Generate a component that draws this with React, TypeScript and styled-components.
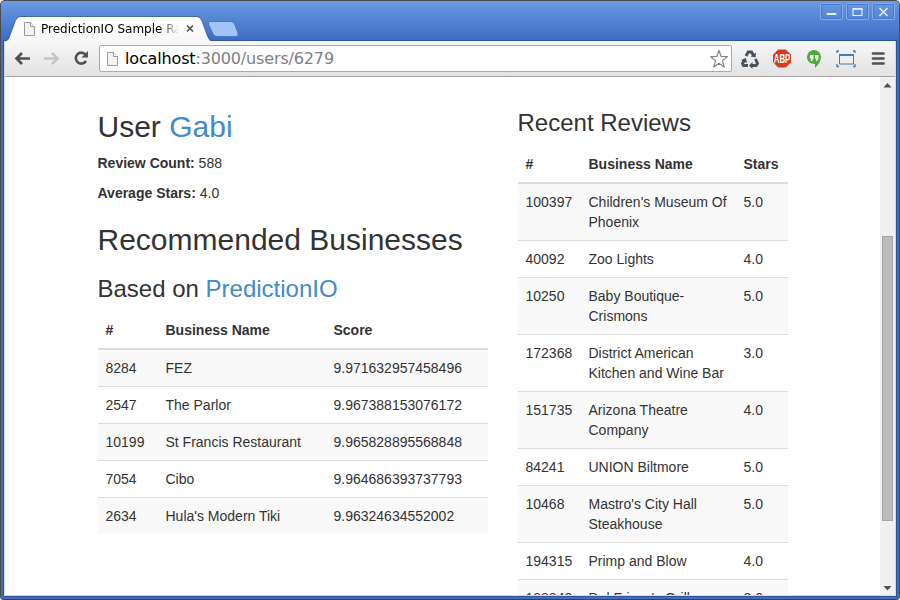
import React from 'react';
import styled, { createGlobalStyle } from 'styled-components';

const Global = createGlobalStyle`
  * { box-sizing: border-box; }
  html, body { margin: 0; padding: 0; background: #fff; }
  body { width: 900px; height: 600px; overflow: hidden; font-family: "Liberation Sans", Arial, sans-serif; }
`;

const Window = styled.div`
  display: flex;
  flex-direction: column;
  width: 900px;
  height: 600px;
  padding: 0 3px 3px;
  border: 1px solid #4a4b50;
  border-bottom-color: #3a4252;
  border-radius: 5px 5px 4px 4px;
  background: linear-gradient(#6b9be2 0, #5f90dc 8px, #3f6dc6 38px, #3f6dc6 100%);
  overflow: hidden;
`;

const TitleBar = styled.header`
  display: flex;
  justify-content: space-between;
  flex: none;
  height: 40px;
  padding-left: 1px;
`;

const TabStrip = styled.div`
  display: grid;
  width: 250px;
  height: 41px;
  z-index: 1;
  > * { grid-area: 1 / 1; }
`;

const TabLabel = styled.div`
  display: flex;
  align-items: center;
  height: 24px;
  margin: 16px 0 0 18px;
  z-index: 1;
`;

const TabTitle = styled.span`
  width: 138px;
  margin-left: 5px;
  overflow: hidden;
  white-space: nowrap;
  color: #000;
  font: 12px/16px "DejaVu Sans", sans-serif;
  mask-image: linear-gradient(90deg, #000 118px, transparent 138px);
`;

const Controls = styled.div`
  display: flex;
  gap: 3px;
  padding: 2px 1px 0 0;
`;

const ControlButton = styled.div`
  display: grid;
  place-items: center;
  width: 23px;
  height: 17px;
  border: 1px solid #87abe5;
  border-radius: 2px;
  box-shadow: inset 0 0 0 1px #4b79cb;
`;

const Frame = styled.div`
  display: flex;
  flex-direction: column;
  flex: 1;
  min-height: 0;
  border: 1px solid #d5d9e1;
  border-top: 0;
  box-shadow: 0 0 0 1px #2c549f;
`;

const Toolbar = styled.nav`
  display: flex;
  align-items: center;
  flex: none;
  height: 36px;
  padding: 0 4px 0 8px;
  border-bottom: 1px solid #a3a3a3;
  background: linear-gradient(#f7f7f7, #e2e2e2);
`;

const NavIcons = styled.div`
  display: flex;
  flex: none;
  width: 86px;
`;

const Address = styled.div`
  display: flex;
  align-items: center;
  flex: none;
  width: 633px;
  height: 27px;
  padding: 0 2px 0 6px;
  border: 1px solid #aaa;
  border-radius: 2px;
  background: #fff;
`;

const Url = styled.span`
  flex: 1;
  margin-left: 6px;
  color: #808080;
  font: 16px/22px "DejaVu Sans", sans-serif;
  letter-spacing: -0.15px;
  b { color: #000; font-weight: 400; }
`;

const Extensions = styled.div`
  display: flex;
  align-items: center;
  flex: none;
  margin-left: 8px;
  gap: 12px;
`;

const Viewport = styled.div`
  display: flex;
  flex: 1;
  min-height: 0;
  background: #fff;
`;

const Page = styled.main`
  display: grid;
  grid-template-columns: 390px 270px;
  column-gap: 30px;
  align-items: start;
  flex: 1;
  padding: 32.6px 0 0 92.5px;
  overflow: hidden;
  color: #333;
  font-size: 14px;
  line-height: 20px;
`;

const Heading = styled.h2`
  margin: 0 0 10px;
  font-size: 30px;
  font-weight: 500;
  line-height: 33px;
  white-space: nowrap;
  p + & { margin-top: 20px; }
`;

const SubHeading = styled.h3`
  margin: 0 0 10px;
  font-size: 24px;
  font-weight: 500;
  line-height: 26.4px;
  h2 + & { margin-top: 20px; }
`;

const Link = styled.a`
  color: #428bca;
`;

const Fact = styled.p`
  margin: 0 0 10px;
`;

const Table = styled.table<{ $columns: string }>`
  display: grid;
  grid-template-columns: ${p => p.$columns};
  thead, tbody, tr { display: grid; grid-column: 1 / -1; grid-template-columns: subgrid; }
  tbody tr { border-bottom: 1px solid #ddd; }
  tbody tr:last-child { border-bottom: 0; }
  tbody tr:nth-child(odd) { background: #f9f9f9; }
  thead tr { border-bottom: 2px solid #ddd; }
  th, td { padding: 8px; text-align: left; }
  td:nth-child(3), th:nth-child(3) { white-space: nowrap; }
`;

const Scrollbar = styled.div`
  display: flex;
  flex-direction: column;
  align-items: center;
  justify-content: space-between;
  width: 15px;
  padding: 6px 0 4px;
  background: #f0f0f0;
`;

const Track = styled.div`
  width: 11px;
  flex: 1;
  padding-top: 148px;
`;

const Thumb = styled.div`
  height: 285px;
  border: 1px solid #a6a6a6;
  background: #bcbcbc;
`;

const Arrow = styled.svg`
  display: block;
  flex: none;
`;

const DocIcon = () => (
  <svg width="13" height="16" viewBox="0 0 13 16">
    <path d="M1.5 1.5h6l4 4v9h-10z" fill="#f4f4f4" stroke="#9a9a9a" />
    <path d="M7.5 1.5v4h4" fill="#fff" stroke="#9a9a9a" />
  </svg>
);

const TabShape = () => (
  <svg width="250" height="41">
    <defs>
      <linearGradient id="tab" x1="0" y1="0" x2="0" y2="1">
        <stop offset="0" stopColor="#fff" />
        <stop offset="1" stopColor="#f7f7f7" />
      </linearGradient>
    </defs>
    <path d="M0 40.5C3 40 4 38 5 35L10.500 20Q12 16 15 16H192Q195 16 197 20L202 34Q204 40 207 40.500V41H0Z" fill="url(#tab)" />
    <path d="M0 40C3 39 4 37 5 34L10 20Q12 15.500 15 15.500H192Q195 15.500 197 20L202 34Q204 39.500 207 39.500H250" fill="none" stroke="#3559a0" strokeOpacity=".7" />
    <path d="M205 20.500H226Q228.500 20.500 229.500 23L233 32Q234 35.500 231 35.500H212Q209 35.500 208 33L203.500 23Q202.500 20.500 205 20.500Z" fill="#a2c4f4" stroke="#4b78c4" />
  </svg>
);

const left = [
  ['8284', 'FEZ', '9.971632957458496'],
  ['2547', 'The Parlor', '9.967388153076172'],
  ['10199', 'St Francis Restaurant', '9.965828895568848'],
  ['7054', 'Cibo', '9.964686393737793'],
  ['2634', "Hula's Modern Tiki", '9.96324634552002'],
];

const right = [
  ['100397', "Children's Museum Of Phoenix", '5.0'],
  ['40092', 'Zoo Lights', '4.0'],
  ['10250', 'Baby Boutique-Crismons', '5.0'],
  ['172368', 'District American Kitchen and Wine Bar', '3.0'],
  ['151735', 'Arizona Theatre Company', '4.0'],
  ['84241', 'UNION Biltmore', '5.0'],
  ['10468', "Mastro's City Hall Steakhouse", '5.0'],
  ['194315', 'Primp and Blow', '4.0'],
  ['188840', "Del Frisco's Grille", '3.0'],
];

function DataTable({ columns, heads, rows }: { columns: string; heads: string[]; rows: string[][] }) {
  return (
    <Table $columns={columns}>
      <thead><tr>{heads.map(h => <th key={h}>{h}</th>)}</tr></thead>
      <tbody>
        {rows.map(r => <tr key={r[0]}>{r.map((c, i) => <td key={i}>{c}</td>)}</tr>)}
      </tbody>
    </Table>
  );
}

export default function App() {
  return (
    <>
      <Global />
      <Window>
        <TitleBar>
          <TabStrip>
            <TabShape />
            <TabLabel>
              <DocIcon />
              <TabTitle>PredictionIO Sample Rails</TabTitle>
              <svg width="20" height="16"><path d="M8 4.500l6 6m0-6l-6 6" stroke="#555" strokeWidth="1.700" /></svg>
            </TabLabel>
          </TabStrip>
          <Controls>
            <ControlButton><svg width="13" height="11"><rect x="1.500" y="7" width="10" height="2" rx="1" fill="#e6effc" /></svg></ControlButton>
            <ControlButton><svg width="13" height="11"><path d="M2 2.500h9v7H2z" fill="none" stroke="#e6effc" strokeWidth="1.200" /><path d="M2 3h9" stroke="#e6effc" strokeWidth="1.600" /></svg></ControlButton>
            <ControlButton><svg width="13" height="11"><path d="M2.500 2l8 8m0-8l-8 8" stroke="#e6effc" strokeWidth="1.500" /></svg></ControlButton>
          </Controls>
        </TitleBar>
        <Frame>
          <Toolbar>
            <NavIcons>
              <svg width="86" height="24" fill="none" strokeWidth="2.600">
                <path d="M17 11.500H4M9 6L3.500 11.500L9 17" stroke="#505050" />
                <path d="M31 11.500H44M39 6L44.500 11.500L39 17" stroke="#c4c4c4" />
                <path d="M72.500 7.500A5.500 5.500 0 1 0 73 14" stroke="#505050" />
                <path d="M75 4V10.500H68.500Z" fill="#505050" />
              </svg>
            </NavIcons>
            <Address>
              <DocIcon />
              <Url><b>localhost</b>:3000/users/6279</Url>
              <svg width="20" height="20"><path d="M10 1.500L12.200 7.500L18.300 7.700L13.500 11.600L15.200 18L10 14.300L4.800 18L6.500 11.600L1.700 7.700L7.800 7.500Z" fill="#fff" stroke="#858585" strokeWidth="1.200" strokeLinejoin="round" /></svg>
            </Address>
            <Extensions>
              <svg width="20" height="20" fill="none" stroke="#47525d" strokeWidth="2.900">
                <path d="M6 7L8.200 3H11.500L13.500 6.500" /><path d="M15.500 10L17.500 14.500L16 16.500H12" /><path d="M8 16.500H3.500L2.500 14.500L4.500 11" />
                <path d="M10.500 7.500L15.500 8.500L16 3.500ZM12.500 13V20L9 16.500ZM1 11L6 9L7 14Z" fill="#47525d" stroke="none" />
              </svg>
              <svg width="20" height="20"><path d="M6.200 .5h7.600L19 5.700v7.600L13.800 18.500H6.200L1 13.300V5.700z" fill="#d33a1f" /><text x="10" y="13.500" textAnchor="middle" textLength="16.500" lengthAdjust="spacingAndGlyphs" fontFamily="Liberation Sans" fontWeight="700" fontSize="12" fill="#fff">ABP</text></svg>
              <svg width="20" height="20"><path d="M10 1a7 7 0 0 1 7 7c0 4-2.800 8-6 11v-4C6 15 3 12 3 8a7 7 0 0 1 7-7" fill="#4eac3f" /><path d="M6 6h3.500v3.500L8 12H6.800l.7-2.500H6zM11 6h3.500v3.500L13 12h-1.200l.7-2.500H11z" fill="#fff" /></svg>
              <svg width="20" height="20" viewBox="0 0 20 20"><g fill="none" stroke="#477fa9"><path d="M1 4V2H3M17 2h2V4M1 15v2.500H3M17 17.500h2V15" strokeWidth="1.300" /><path d="M3.500 5.500h14v9.500h-14z" fill="#eee" /><path d="M3 6h15" strokeWidth="2" /></g></svg>
              <svg width="20" height="20"><path d="M5 4.500H15.500M5 9.500H15.500M5 14.500H15.500" stroke="#505050" strokeWidth="2.700" strokeLinecap="round" /></svg>
            </Extensions>
          </Toolbar>
          <Viewport>
            <Page>
              <section>
                <Heading>User <Link>Gabi</Link></Heading>
                <Fact><b>Review Count:</b> 588</Fact>
                <Fact><b>Average Stars:</b> 4.0</Fact>
                <Heading>Recommended Businesses</Heading>
                <SubHeading>Based on <Link>PredictionIO</Link></SubHeading>
                <DataTable columns="60px 168px 162px" heads={['#', 'Business Name', 'Score']} rows={left} />
              </section>
              <section>
                <SubHeading>Recent Reviews</SubHeading>
                <DataTable columns="63px 155px 52px" heads={['#', 'Business Name', 'Stars']} rows={right} />
              </section>
            </Page>
            <Scrollbar>
              <Arrow width="9" height="5"><path d="M4.500 0L8.500 4.500H.5Z" fill="#505050" /></Arrow>
              <Track><Thumb /></Track>
              <Arrow width="9" height="5"><path d="M.5 0H8.500L4.500 4.500Z" fill="#505050" /></Arrow>
            </Scrollbar>
          </Viewport>
        </Frame>
      </Window>
    </>
  );
}
